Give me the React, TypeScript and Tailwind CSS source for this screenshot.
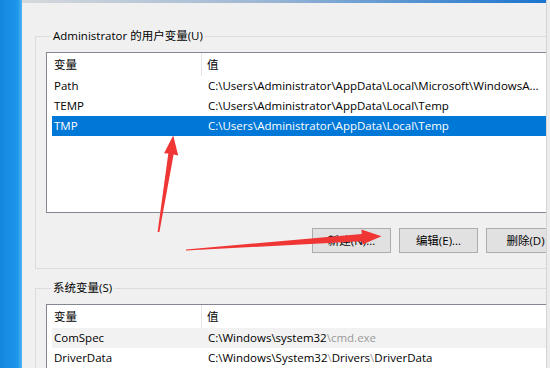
import React from "react";

function Row({ name, selected, bg, children }: { name: string; selected?: boolean; bg?: string; children: React.ReactNode }) {
  return (
    <div className={`flex h-[20px] items-center ml-[5px] ${selected ? "bg-[#0078d7] text-white" : bg ?? ""}`}>
      <div className="w-[150px] pl-[2px] shrink-0 whitespace-nowrap">{name}</div>
      <div className="pl-[6px] whitespace-nowrap">{children}</div>
    </div>
  );
}

function Header() {
  return (
    <div className="flex h-[23px] items-center">
      <div className="w-[155px] pl-[7px] shrink-0 h-full flex items-center border-r border-[#e5e5e5]">变量</div>
      <div className="pl-[5px]">值</div>
    </div>
  );
}

function Arrows() {
  return (
    <svg className="absolute left-0 top-0 pointer-events-none" width="550" height="368" viewBox="0 0 550 368">
      <polygon
        fill="#f03535"
        points="157.6,232 168.3,153.6 164.1,153.2 173.2,135.5 178.2,155.4 173.6,154.6 159.4,232"
      />
      <polygon
        fill="#f03535"
        points="186,250.6 361.6,241.2 362.6,244.6 381.5,236.2 361.4,229.6 361.8,233.9 186,249.4"
      />
    </svg>
  );
}

function Btn({ children }: { children: React.ReactNode }) {
  return <button className="w-[79px] h-[25px] shrink-0 bg-[#e1e1e1] border border-[#adadad]">{children}</button>;
}

export default function App() {
  return (
    <div className="relative flex w-[550px] h-[368px] overflow-hidden bg-[#f0f0f0] text-[11.5px] text-black font-['Open_Sans','Noto_Sans_CJK_SC',sans-serif]">
      <div className="w-[22px] shrink-0 bg-[linear-gradient(90deg,#1386de,#1e96ea_80%,#4fb6f0)]" />
      <div className="flex flex-col w-[525px] shrink-0 overflow-hidden border-r border-[#d4d4d4]">
        <div className="h-[3px] shrink-0 bg-[linear-gradient(90deg,#d6d9dc,#9fb8d4_45%,#1a74cf)]" />
        <div className="pl-[13px] pt-[25px] flex flex-col">
          <fieldset className="w-[560px] shrink-0 border border-[#dcdcdc] pl-[10px] pb-[15px]">
            <legend className="ml-[5px] px-[2px] leading-[16px]">Administrator 的用户变量(U)</legend>
            <div className="pt-[8px]">
              <div className="h-[161px] w-[520px] border border-[#828790] bg-white">
                <Header />
                <Row name="Path">C:\Users\Administrator\AppData\Local\Microsoft\WindowsA...</Row>
                <Row name="TEMP">C:\Users\Administrator\AppData\Local\Temp</Row>
                <Row name="TMP" selected>C:\Users\Administrator\AppData\Local\Temp</Row>
              </div>
              <div className="flex gap-[8px] pl-[266px] pt-[15px]">
                <Btn>新建(N)...</Btn>
                <Btn>编辑(E)...</Btn>
                <Btn>删除(D)</Btn>
              </div>
            </div>
          </fieldset>
          <fieldset className="w-[560px] shrink-0 mt-[11px] border border-[#dcdcdc] pl-[10px] pb-[15px]">
            <legend className="ml-[5px] px-[2px] leading-[16px]">系统变量(S)</legend>
            <div className="pt-[8px]">
              <div className="h-[161px] w-[520px] border border-[#828790] bg-white">
                <Header />
                <Row name="ComSpec" bg="bg-[#f2f2f2]">
                  C:\Windows\system32<span className="text-[#9a9a9a]">\cmd.exe</span>
                </Row>
                <Row name="DriverData">
                  C:\Windows\System32<span className="text-[#9a9a9a]">\</span>Drivers<span className="text-[#9a9a9a]">\</span>DriverData
                </Row>
              </div>
            </div>
          </fieldset>
        </div>
      </div>
      <div className="flex-1 bg-[#ececec]" />
      <Arrows />
    </div>
  );
}
